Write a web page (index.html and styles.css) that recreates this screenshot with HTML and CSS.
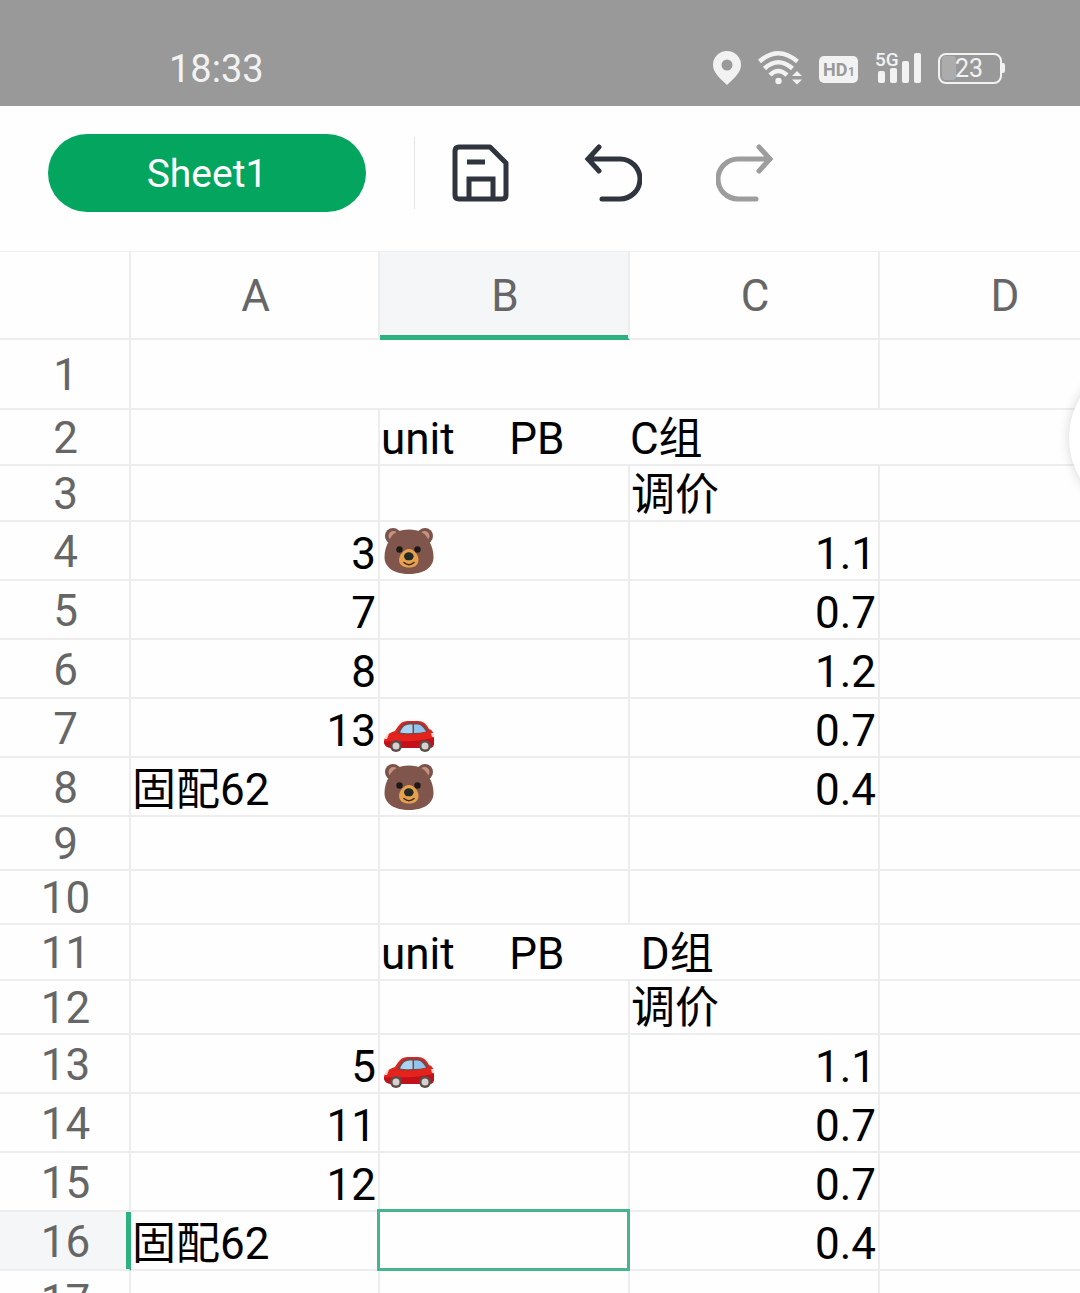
FILE: index.html
```html
<!DOCTYPE html>
<html lang="zh-CN">

	<head>
		<meta charset="UTF-8">
		<meta name="viewport" content="width=device-width, initial-scale=1">
		<title>Sheet1</title>
		<link rel="stylesheet" href="styles.css">
	</head>

	<body>
		<svg class="defs" aria-hidden="true">
			<symbol id="bear" viewBox="0 -1 56 52">
				<circle cx="12" cy="8" r="8" fill="#7a5249" />
				<circle cx="44" cy="8" r="8" fill="#7a5249" />
				<circle cx="12.500" cy="8" r="5" fill="#c59180" />
				<circle cx="43.500" cy="8" r="5" fill="#c59180" />
				<path d="M28 1.500C38 1.500 45 5 48 13C51 18 52.500 23 52.500 29C52.500 40 42 46 28 46S3.500 40 3.500 29C3.500 23 5 18 8 13C11 5 18 1.500 28 1.500Z" fill="#80564c" />
				<circle cx="18.500" cy="21.500" r="3.200" fill="#1d1918" />
				<circle cx="36.500" cy="21.500" r="3.200" fill="#1d1918" />
				<path d="M28 21C33 21 37.500 27 37.500 32C37.500 37 33.500 39.500 28 39.500S18 37 18 32C18 27 23 21 28 21Z" fill="#e7a04c" />
				<ellipse cx="27.800" cy="28.300" rx="4.800" ry="4" fill="#202b25" />
				<path d="M23 34.500Q28 39 33 34.500" fill="none" stroke="#3b2a1c" stroke-width="1.600" stroke-linecap="round" />
			</symbol>
			<symbol id="car" viewBox="0 -1 56 52">
				<path d="M3 37C3 31 8 28 14 26C18 20 20 16 27 16H37C43 16 46 20 48 24C52 25 53 29 53 34V38Q53 43 48 43H10Q3 42 3 37Z" fill="#e3231c" />
				<path d="M3 36Q28 38 53 33V38Q53 43 48 43H10Q3 42 3 37Z" fill="#c4101b" />
				<path d="M16 28.500C20 20 22 17.500 28 17.500H36C42 17.500 44 21 48 26.500Q32 31 16 28.500Z" fill="#7c4545" />
				<path d="M19 27.500C22 21 24 19.500 31.500 19.500V28Q24 28.500 19 27.500Z" fill="#a9d5f5" />
				<path d="M33 19.500C39 19 41 20 45 26.500Q39 28 33 28Z" fill="#91c5ee" />
				<path d="M4 31L8 29L6 34L3.500 34ZM50 28L53 28V32L51 32Z" fill="#ffd7cf" />
				<circle cx="15" cy="41" r="6" fill="#5b4c49" />
				<circle cx="44" cy="41" r="6" fill="#5b4c49" />
				<circle cx="15" cy="41" r="3.500" fill="#d5d2d0" />
				<circle cx="44" cy="41" r="3.500" fill="#d5d2d0" />
			</symbol>
		</svg>

		<header class="status">
			<time class="clock">18:33</time>
			<div class="signals">
				<svg width="28" height="34" viewBox="0 0 28 34" fill="#f2f2f2">
					<path fill-rule="evenodd" d="M14 0A14 14 0 0 0 0 14C0 22 8 28 14 34C20 28 28 22 28 14A14 14 0 0 0 14 0ZM14 8.500A5.500 5.500 0 1 1 14 19.500A5.500 5.500 0 0 1 14 8.500Z" />
				</svg>
				<svg width="44" height="34" viewBox="0 0 44 34" fill="none" stroke="#f2f2f2" stroke-width="4.500">
					<path d="M1.500 10.500Q20 -6 39.500 10.500" />
					<path d="M6.500 17.500Q20 5 34.500 17.500" />
					<path d="M12 24Q20 16 29 24" />
					<circle cx="20.500" cy="30" r="3.200" fill="#f2f2f2" stroke="none" />
					<path d="M34 25L39 20L44 25ZM34 28.500L39 33.500L44 28.500Z" fill="#f2f2f2" stroke="none" />
				</svg>
				<svg width="39" height="34" viewBox="0 0 39 34">
					<rect y="5" width="39" height="27" rx="5" fill="#f2f2f2" />
					<text class="hd" x="4" y="25">HD</text>
					<text class="hd-sub" x="29" y="25">1</text>
				</svg>
				<svg width="46" height="34" viewBox="0 0 46 34" fill="#f2f2f2">
					<text class="net" x="0" y="15">5G</text>
					<rect x="3" y="20" width="7" height="12" rx="2" />
					<rect x="15" y="17" width="7" height="15" rx="2" />
					<rect x="27" y="10" width="7" height="22" rx="2" />
					<rect x="39" y="2" width="7" height="30" rx="2" />
				</svg>
				<svg width="67" height="34" viewBox="0 0 67 34">
					<rect x="4" y="5" width="14" height="24" rx="4" fill="#acacac" />
					<rect x="1" y="3" width="62" height="29" rx="7" fill="none" stroke="#f2f2f2" stroke-width="2" />
					<path d="M64 12H65Q67 12 67 14V20Q67 22 65 22H64Z" fill="#f2f2f2" />
					<text class="level" x="31" y="26">23</text>
				</svg>
			</div>
		</header>

		<nav class="toolbar">
			<button class="sheet" type="button">Sheet1</button>
			<span class="line"></span>
			<button class="tool" type="button" aria-label="保存">
				<svg width="58" height="58" viewBox="0 0 58 58" fill="none" stroke="#30343e" stroke-width="5">
					<path d="M7 3H38L54 19V51Q54 55 50 55H7Q3 55 3 51V7Q3 3 7 3Z" stroke-linejoin="round" />
					<path d="M15 18H33M17 55V35H41V55" />
				</svg>
			</button>
			<button class="tool" type="button" aria-label="撤销">
				<svg width="58" height="58" viewBox="0 0 58 58" fill="none" stroke="#30343e" stroke-width="5" stroke-linecap="round">
					<path d="M15 3L4 15L15 27M4 15H36A20 20 0 0 1 36 55H18" />
				</svg>
			</button>
			<button class="tool" type="button" aria-label="重做" disabled>
				<svg width="58" height="58" viewBox="0 0 58 58" fill="none" stroke="#9d9d9d" stroke-width="5" stroke-linecap="round">
					<path d="M43 3L54 15L43 27M54 15H22A20 20 0 0 0 22 55H40" />
				</svg>
			</button>
		</nav>

		<main class="grid">
			<table>
				<colgroup>
					<col class="num">
					<col class="first">
					<col>
					<col>
					<col>
				</colgroup>
				<thead>
					<tr>
						<th></th>
						<th>A</th>
						<th class="now">B</th>
						<th>C</th>
						<th>D</th>
					</tr>
				</thead>
				<tbody>
					<tr class="tall"><th>1</th><td colspan="3"></td><td></td></tr>
					<tr class="mid"><th>2</th><td></td><td class="text" colspan="3">unit     PB      C组</td></tr>
					<tr class="mid"><th>3</th><td></td><td></td><td class="text">调价</td><td></td></tr>
					<tr><th>4</th><td>3</td><td class="text"><svg class="emoji" role="img" aria-label="🐻"><use href="#bear" /></svg></td><td>1.1</td><td></td></tr>
					<tr><th>5</th><td>7</td><td></td><td>0.7</td><td></td></tr>
					<tr><th>6</th><td>8</td><td></td><td>1.2</td><td></td></tr>
					<tr><th>7</th><td>13</td><td class="text"><svg class="emoji" role="img" aria-label="🚗"><use href="#car" /></svg></td><td>0.7</td><td></td></tr>
					<tr><th>8</th><td class="text">固配62</td><td class="text"><svg class="emoji" role="img" aria-label="🐻"><use href="#bear" /></svg></td><td>0.4</td><td></td></tr>
					<tr class="low"><th>9</th><td></td><td></td><td></td><td></td></tr>
					<tr class="low"><th>10</th><td></td><td></td><td></td><td></td></tr>
					<tr class="mid"><th>11</th><td></td><td class="text" colspan="2">unit     PB       D组</td><td></td></tr>
					<tr class="low"><th>12</th><td></td><td></td><td class="text">调价</td><td></td></tr>
					<tr><th>13</th><td>5</td><td class="text"><svg class="emoji" role="img" aria-label="🚗"><use href="#car" /></svg></td><td>1.1</td><td></td></tr>
					<tr><th>14</th><td>11</td><td></td><td>0.7</td><td></td></tr>
					<tr><th>15</th><td>12</td><td></td><td>0.7</td><td></td></tr>
					<tr><th class="now">16</th><td class="text">固配62</td><td class="selected"></td><td>0.4</td><td></td></tr>
					<tr><th>17</th><td></td><td></td><td></td><td></td></tr>
				</tbody>
			</table>
			<div class="float"></div>
		</main>
	</body>

</html>
```
FILE: styles.css
```css
html,
body {
	height: 100%;
}

body {
	margin: 0;
	display: flex;
	flex-direction: column;
	overflow: hidden;
	background: #fefefe;
	font-family: Roboto, "Noto Sans CJK SC", sans-serif;
}

.defs {
	position: absolute;
	width: 0;
	height: 0;
}

/* status bar */

.status {
	display: flex;
	flex: none;
	justify-content: space-between;
	align-items: center;
	box-sizing: border-box;
	height: 106px;
	padding: 30px 75px 0 169px;
	background: #999;
	color: #f2f2f2;
}

.clock {
	padding-top: 2px;
	font-size: 38px;
}

.signals {
	display: flex;
	gap: 17px;
}

.signals svg {
	display: block;
	overflow: visible;
}

.hd {
	font-size: 18px;
	font-weight: bold;
	fill: #999;
}

.hd-sub {
	font-size: 12px;
	font-weight: bold;
	fill: #999;
}

.net {
	font-size: 19px;
	font-weight: 500;
}

.level {
	font-size: 25px;
	fill: #f2f2f2;
	text-anchor: middle;
}

/* toolbar */

.toolbar {
	display: flex;
	flex: none;
	align-items: center;
	box-sizing: border-box;
	height: 145px;
	padding: 0 48px 12px;
}

button {
	border: 0;
	padding: 0;
	background: none;
	font-family: inherit;
}

.sheet {
	width: 318px;
	height: 78px;
	padding-top: 3px;
	border-radius: 39px;
	background: #03a55f;
	color: #fff;
	font-size: 39px;
}

.line {
	width: 1px;
	height: 72px;
	margin: 0 37px 0 48px;
	background: #e4e4e4;
}

.tool {
	margin-right: 74px;
}

.tool svg {
	display: block;
}

/* cells */

.grid {
	position: relative;
	flex: 1;
	min-height: 0;
	overflow: hidden;
	border-top: 1px solid #eee;
}

table {
	width: 1130px;
	table-layout: fixed;
	border-collapse: separate;
	border-spacing: 0;
	font-size: 44px;
	line-height: 50px;
}

col {
	width: 250px;
}

.num {
	width: 131px;
}

.first {
	width: 249px;
}

th,
td {
	box-sizing: border-box;
	height: 59px;
	padding: 0 2px;
	border: solid #ededee;
	border-width: 0 2px 2px 0;
}

th {
	padding: 2px 0 0 2px;
	color: #666;
	font-weight: normal;
}

thead th {
	height: 88px;
}

td {
	color: #000;
	text-align: right;
	vertical-align: bottom;
	white-space: pre;
}

.tall > * {
	height: 70px;
}

.mid > * {
	height: 56px;
}

.low > * {
	height: 54px;
}

.text {
	padding: 0 1px;
	text-align: left;
}

.emoji {
	display: block;
	width: 56px;
	height: 52px;
}

.now {
	background: #f4f6f8;
}

thead .now {
	border-bottom-color: #2bb27e;
	box-shadow: inset 0 -3px #2bb27e;
}

tbody .now {
	border-right-color: #2bb27e;
	box-shadow: inset -3px 0 #2bb27e;
}

.selected {
	position: relative;
}

.selected::after {
	content: "";
	position: absolute;
	inset: -3px -2px -2px -3px;
	border: 3px solid #45b68c;
}

/* round handle over the right edge */

.float {
	position: absolute;
	top: 108px;
	right: -145px;
	width: 156px;
	height: 156px;
	border-radius: 50%;
	background: #fff;
	box-shadow: 0 0 12px rgba(0, 0, 0, .16);
}
```
